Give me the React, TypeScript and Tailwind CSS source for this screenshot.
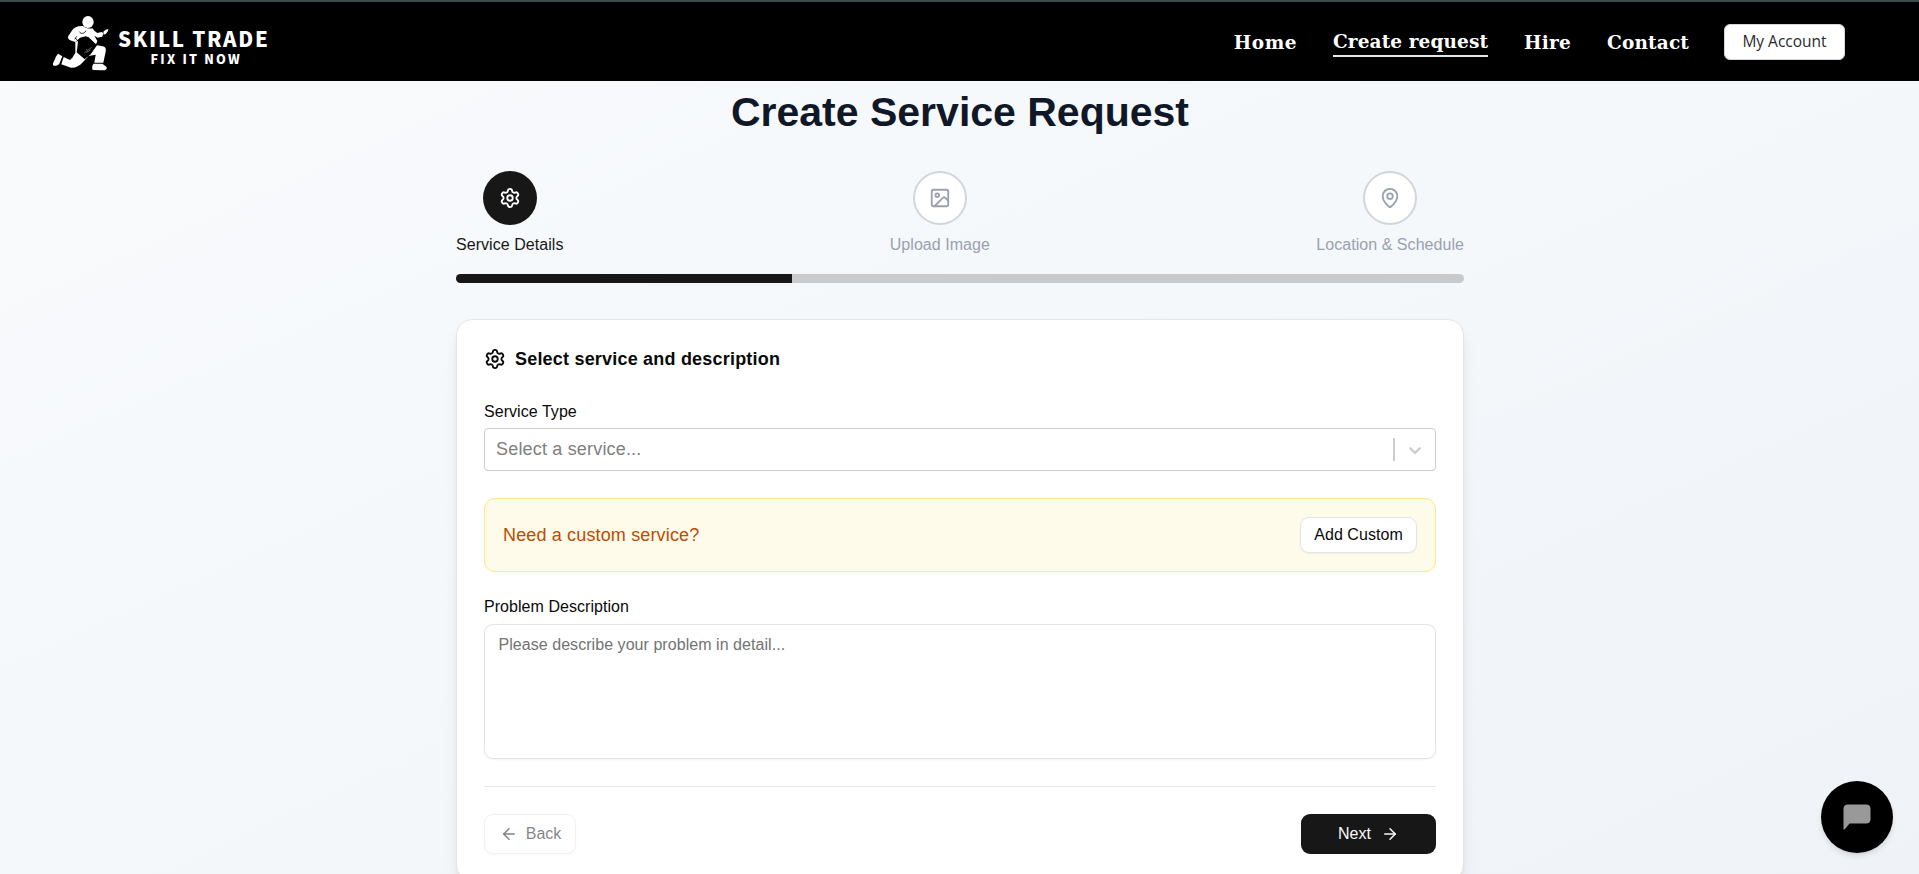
import type { ReactNode } from "react";
import { ArrowLeft, ArrowRight, Image as ImageIcon, MapPin, Settings } from "lucide-react";

function Runner() {
  return (
    <svg viewBox="36 44 174 171" className="mt-[3px] h-[57px] w-[58px] shrink-0" fill="#fff">
      <ellipse cx="144" cy="65" rx="17" ry="18" />
      <path d="M129 77 C114 76 101 81 95 92 L85 107 C82 114 87 119 94 121 L106 125 L113 119 L120 112 L137 108 L146 111 L168 132 L172 122 L163 106 L173 112 L187 109 L190 98 L184 95 L172 98 L164 92 L157 84 C150 86 137 84 129 77 Z" />
      <path d="M190 94 L197 88 L205 86 L204 92 L198 100 L191 103 Z" />
      <path d="M106 124 L114 122 L112 142 L110 156 L134 177 L152 162 L171 135 L184 137 C195 138 199 143 197 154 L190 187 L163 187 L167 163 L146 167 L127 187 C119 196 106 203 93 202 L64 192 L71 170 L90 179 L97 172 L106 157 Z" />
      <path d="M54 160 L67 168 L58 190 C52 197 42 199 39 193 C38 187 46 178 47 170 Z" />
      <path d="M160 190 L187 190 L199 199 C203 206 197 210 187 210 L158 209 C155 203 157 195 160 190 Z" />
      <path d="M118 94 C122 101 132 102 138 91 M104 117 L110 108 M113 121 L106 113" fill="none" stroke="#000" strokeWidth="2.5" />
      <path d="M133 157 L155 141 M139 146 L141 149 M139 157 L151 149" fill="none" stroke="#bbb" strokeWidth="1.6" />
    </svg>
  );
}

function Step({ icon, label, active }: { icon: ReactNode; label: string; active?: boolean }) {
  return (
    <div className="flex flex-col items-center gap-[9px]">
      <div
        className={
          active
            ? "flex size-[54px] items-center justify-center rounded-full bg-[#171717] text-white"
            : "flex size-[54px] items-center justify-center rounded-full border-2 border-[#d1d5dc] bg-white text-[#99a1af]"
        }
      >
        {icon}
      </div>
      <span
        className={
          active
            ? "text-[16px] leading-[22px] tracking-[0.05px] text-[#171717]"
            : "text-[16px] leading-[22px] tracking-[0.05px] text-[#99a1af]"
        }
      >
        {label}
      </span>
    </div>
  );
}

function Header() {
  return (
    <header className="flex h-[81px] items-center justify-between border-t-2 border-[#3b4a4c] bg-black pr-[74px] pl-[52px]">
      <div className="flex items-center">
        <Runner />
        <div className="flex flex-col items-center pt-[9px] pl-[8px] font-['Noto_Sans_CJK_SC',sans-serif] font-black text-white">
          <span className="text-[20.5px] leading-[24px] tracking-[1.7px]">SKILL TRADE</span>
          <span className="pl-[5px] text-[12.5px] leading-[17px] tracking-[2.2px]">FIX IT NOW</span>
        </div>
      </div>
      <nav className="flex items-center font-['DejaVu_Serif',serif] text-[18.5px] leading-[27px] font-bold text-white">
        <a className="mt-[2px] mr-9 tracking-[0.5px]">Home</a>
        <a className="mt-[2px] mr-9 border-b-2 border-[#e5e7eb] tracking-[0.1px]">Create request</a>
        <a className="mt-[2px] mr-9 tracking-[0.25px]">Hire</a>
        <a className="mt-[2px] mr-[35px] tracking-[0.15px]">Contact</a>
        <button className="h-9 w-[121px] rounded-[6px] border border-[#d1d5dc] bg-white font-['Open_Sans',sans-serif] text-[15.5px] font-normal text-[#2a2a2a]">
          My Account
        </button>
      </nav>
    </header>
  );
}

export default function App() {
  return (
    <div className="relative h-[874px] overflow-hidden bg-linear-to-br from-[#f9fafc] via-[#f4f8fb] to-[#eff3f8] font-['Liberation_Sans',Arial,sans-serif] text-[#0a0a0a]">
      <Header />
      <main className="ml-[456px] w-[1008px] pt-[9px]">
        <h1 className="text-center text-[41px] leading-[45px] font-bold text-[#101828]">
          Create Service Request
        </h1>
        <div className="mt-9 flex justify-between">
          <Step active icon={<Settings size={22} />} label="Service Details" />
          <Step icon={<ImageIcon size={22} />} label="Upload Image" />
          <Step icon={<MapPin size={22} />} label="Location & Schedule" />
        </div>
        <div className="mt-[18px] h-[9px] overflow-hidden rounded-full bg-[#c9cacc]">
          <div className="h-full w-1/3 bg-[#171717]" />
        </div>
        <section className="mt-9 h-[562px] rounded-[16px] border border-[#e5e5e5] bg-white px-[27px] pt-[27px] shadow-lg">
          <h2 className="flex h-[23px] items-center gap-[9px] text-[18px] font-bold tracking-[0.2px]">
            <Settings size={22} />
            <span className="pt-px">Select service and description</span>
          </h2>
          <label className="mt-[31px] block text-[16px] leading-[22px] tracking-[0.05px]">Service Type</label>
          <div className="mt-[5px] flex h-[43px] items-center rounded-[4px] border border-[#cccccc] bg-white">
            <span className="grow pl-[11px] text-[18px] tracking-[0.18px] text-[#808080]">Select a service...</span>
            <span className="h-[23px] w-[2px] bg-[#cccccc]" />
            <span className="flex w-[40px] justify-center text-[#cccccc]">
              <svg width="20" height="20" viewBox="0 0 20 20" fill="currentColor">
                <path d="M4.516 7.548c0.436-0.446 1.043-0.481 1.576 0l3.908 3.747 3.908-3.747c0.533-0.481 1.141-0.446 1.574 0 0.436 0.445 0.408 1.197 0 1.615-0.406 0.418-4.695 4.502-4.695 4.502-0.217 0.223-0.502 0.335-0.787 0.335s-0.57-0.112-0.789-0.335c0 0-4.287-4.084-4.695-4.502s-0.436-1.17 0-1.615z" />
              </svg>
            </span>
          </div>
          <div className="mt-[27px] flex h-[74px] items-center justify-between rounded-[11px] border border-[#fee685] bg-[#fffbeb] px-[18px]">
            <span className="text-[18px] tracking-[0.15px] text-[#bb4d00]">Need a custom service?</span>
            <button className="h-9 w-[117px] rounded-[9px] border border-[#e5e5e5] bg-white text-[16px] tracking-[0.05px] shadow-xs">
              Add Custom
            </button>
          </div>
          <label className="mt-[24px] block text-[16px] leading-[22px] tracking-[0.05px]">Problem Description</label>
          <textarea
            className="mt-[6px] block h-[135px] w-full resize-none rounded-[9px] border border-[#e5e5e5] bg-white px-[13.5px] py-[9px] text-[16px] leading-[22px] tracking-[0.05px] shadow-xs placeholder:text-[#737373]"
            placeholder="Please describe your problem in detail..."
          />
          <div className="mt-[27px] flex justify-between border-t border-[#e5e5e5] pt-[27px]">
            <button className="flex h-10 w-[92px] items-center justify-center gap-[8px] rounded-[9px] border border-[#e5e5e5] bg-white pl-px text-[16px] opacity-50 shadow-xs">
              <ArrowLeft size={18} />
              Back
            </button>
            <button className="flex h-10 w-[135px] items-center justify-center gap-[10px] rounded-[9px] bg-[#171717] text-[16px] text-[#fafafa]">
              Next
              <ArrowRight size={18} />
            </button>
          </div>
        </section>
      </main>
      <button className="absolute right-[26px] bottom-[21px] flex size-[72px] items-center justify-center rounded-full bg-black shadow-md">
        <svg width="28" height="26" viewBox="0 0 28 26" fill="#999">
          <path d="M5 0.5 H23 Q27.5 0.5 27.5 5 V15 Q27.5 19.5 23 19.5 H6.5 L1.5 25.5 H0.5 V5 Q0.5 0.5 5 0.5 Z" />
        </svg>
      </button>
    </div>
  );
}
